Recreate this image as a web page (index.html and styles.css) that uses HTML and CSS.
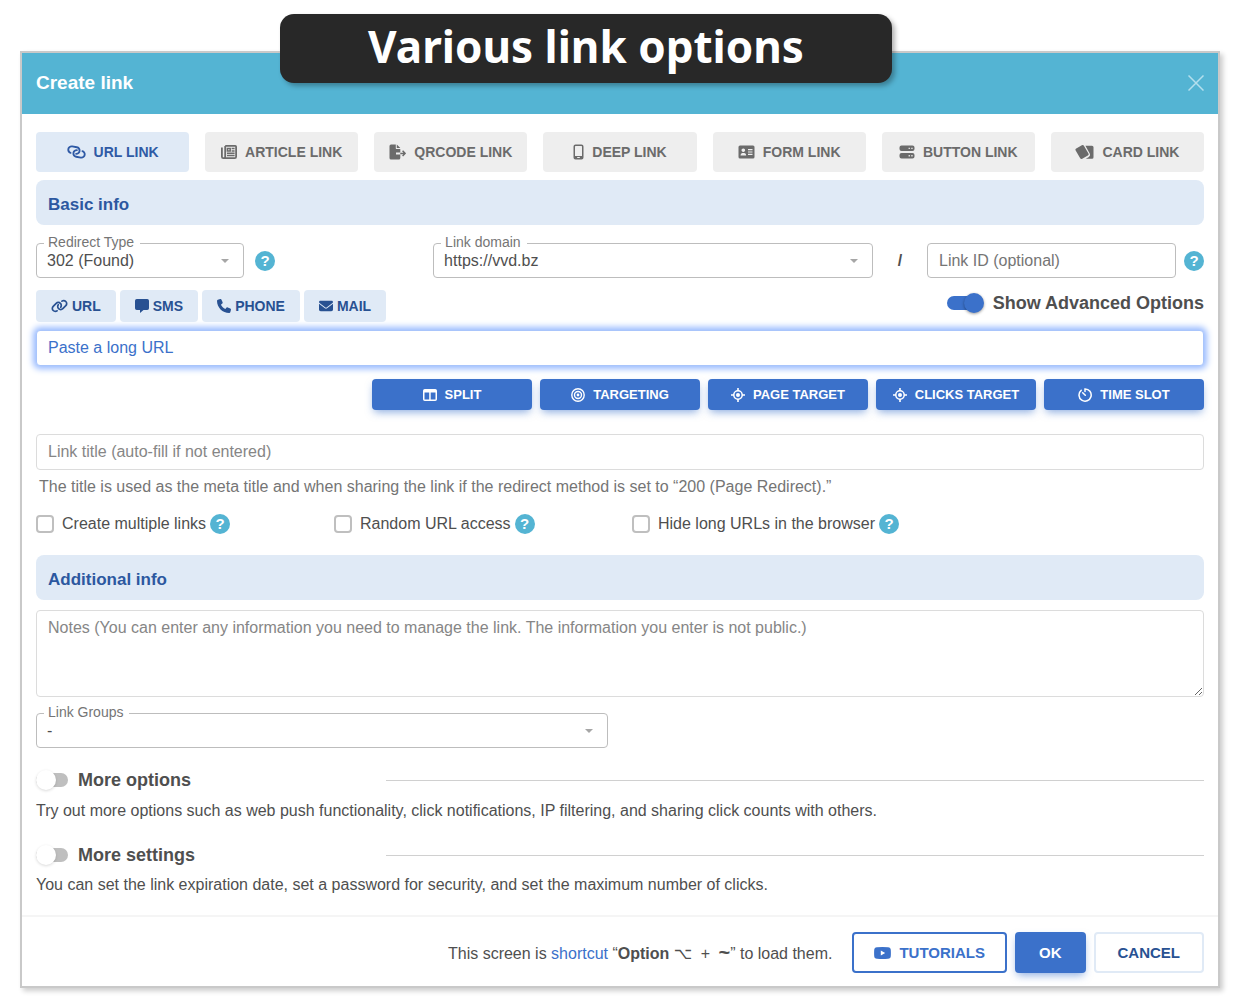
FILE: index.html
```html
<!DOCTYPE html>
<html lang="en">

<head>
    <meta charset="UTF-8">
    <meta name="viewport" content="width=device-width, initial-scale=1.0">
    <title>Create link</title>
    <link rel="stylesheet" href="styles.css">
</head>

<body>
    <svg class="sprite" aria-hidden="true">
        <symbol id="i-link" viewBox="0 0 640 512">
            <path d="M579.8 267.7c56.5-56.5 56.5-148 0-204.5c-50-50-128.8-56.5-186.3-15.4l-1.6 1.1c-14.4 10.3-17.7 30.3-7.4 44.6s30.3 17.7 44.6 7.4l1.6-1.1c32.1-22.9 76-19.3 103.8 8.6c31.5 31.5 31.5 82.5 0 114L422.3 334.8c-31.5 31.5-82.5 31.5-114 0c-27.9-27.9-31.5-71.8-8.6-103.8l1.1-1.6c10.3-14.4 6.9-34.4-7.4-44.6s-34.4-6.9-44.6 7.4l-1.1 1.6C206.5 251.2 213 330 263 380c56.5 56.5 148 56.5 204.5 0L579.8 267.7zM60.2 244.3c-56.5 56.5-56.5 148 0 204.5c50 50 128.8 56.5 186.3 15.4l1.6-1.1c14.4-10.3 17.7-30.3 7.4-44.6s-30.3-17.7-44.6-7.4l-1.6 1.1c-32.1 22.9-76 19.3-103.8-8.6C74 372 74 321 105.5 289.5L217.7 177.2c31.5-31.5 82.5-31.5 114 0c27.9 27.9 31.5 71.8 8.6 103.9l-1.1 1.6c-10.3 14.4-6.9 34.4 7.4 44.6s34.4 6.9 44.6-7.4l1.1-1.6C433.5 260.8 427 182 377 132c-56.5-56.5-148-56.5-204.5 0L60.2 244.3z" />
        </symbol>
        <symbol id="i-crosshair" viewBox="0 0 14 14">
            <circle cx="7" cy="7" r="4.2" fill="none" stroke="currentColor" stroke-width="1.5" />
            <circle cx="7" cy="7" r="2" />
            <path d="M7 0v3M7 11v3M0 7h3M11 7h3" stroke="currentColor" stroke-width="1.6" />
        </symbol>
    </svg>

    <h1 class="banner">Various link options</h1>

    <form class="modal">
        <div class="modal-header">
            <h2>Create link</h2>
            <button type="button" class="close" aria-label="Close">
                <svg width="16" height="16" viewBox="0 0 16 16"><path d="M.5.5l15 15M15.5.5l-15 15" fill="none" stroke="currentColor" stroke-width="1.5" /></svg>
            </button>
        </div>

        <div class="modal-body">
            <div class="tabs">
                <button type="button" class="tab active">
                    <svg width="19" height="16" viewBox="0 0 640 512"><g transform="translate(320 256) rotate(55) translate(-320 -256)"><use href="#i-link" width="640" height="512" /></g></svg>
                    URL LINK
                </button>
                <button type="button" class="tab">
                    <svg width="16" height="14" viewBox="0 0 16 14"><path d="M4.2.9h10q.9 0 .9.9v9.9q0 1.4-1.4 1.4H2.3q-1.4 0-1.4-1.4V2.5M4.2.9v10.8q0 1.4-1.6 1.4" fill="none" stroke="currentColor" stroke-width="1.8" /><path d="M6.4 3.5h2.8v2.5H6.4zM10.6 3.6h3M10.6 5.9h3M6 8.2h7.6M6 10.5h7.6" fill="none" stroke="currentColor" stroke-width="1.5" /></svg>
                    ARTICLE LINK
                </button>
                <button type="button" class="tab">
                    <svg width="17" height="16" viewBox="0 0 17 16"><path d="M2 .5h4.8v3.7q0 .9.9.9h3.6v3.3H7v2h4.3V14q0 1.5-1.5 1.5H2Q.5 15.5.5 14V2Q.5.5 2 .5zM7.8.5l3.5 3.5H7.8z" /><path d="M11.3 9.4h4.5M13.6 6.8l2.5 2.6-2.5 2.6" fill="none" stroke="currentColor" stroke-width="1.5" /></svg>
                    QRCODE LINK
                </button>
                <button type="button" class="tab">
                    <svg width="11" height="16" viewBox="0 0 11 16"><path fill-rule="evenodd" d="M2.5.5h6Q10.5.5 10.5 2.5v11q0 2-2 2h-6q-2 0-2-2v-11q0-2 2-2zM2 2.4v9.6h7V2.4Q9 2 8.5 2h-6Q2 2 2 2.4zM4.2 13v1h2.6v-1z" /></svg>
                    DEEP LINK
                </button>
                <button type="button" class="tab">
                    <svg width="17" height="14" viewBox="0 0 17 14"><path fill-rule="evenodd" d="M2 .5h13q1.5 0 1.5 1.5v10q0 1.5-1.5 1.5H2Q.5 13.5.5 12V2Q.5.5 2 .5zM5.3 3.4a1.8 1.8 0 1 0 .01 0zM2.5 10.5h5.7Q8.2 8 6.3 8H4.4Q2.5 8 2.5 10.5zM10 4v1.2h4.5V4zM10 6.4v1.2h4.5V6.4zM10 8.8V10h4.5V8.8z" /></svg>
                    FORM LINK
                </button>
                <button type="button" class="tab">
                    <svg width="16" height="14" viewBox="0 0 16 14"><path fill-rule="evenodd" d="M2.5.5h11q2 0 2 2v1.6q0 2-2 2h-11q-2 0-2-2V2.5q0-2 2-2zM2.5 7.9h11q2 0 2 2v1.6q0 2-2 2h-11q-2 0-2-2V9.9q0-2 2-2zM9.6 2.7v1.3h1.3V2.7zM12.3 2.7v1.3h1.3V2.7zM9.6 10.1v1.3h1.3v-1.3zM12.3 10.1v1.3h1.3v-1.3z" /></svg>
                    BUTTON LINK
                </button>
                <button type="button" class="tab">
                    <svg width="19" height="16" viewBox="0 0 19 16"><rect x="2.3" y="2" width="9.5" height="12" rx="1.5" transform="rotate(-30 7 8)" /><path d="M10.4 1.7h6.6q1.5 0 1.5 1.5v10q0 1.5-1.5 1.5h-6.3q3.5-1.4 4.2-3 .4-1-.3-2.4z" /></svg>
                    CARD LINK
                </button>
            </div>

            <h3 class="section">Basic info</h3>

            <div class="domain-row">
                <div class="group">
                    <div class="field redirect">
                        <label for="redirect">Redirect Type</label>
                        <select id="redirect"><option>302 (Found)</option></select>
                    </div>
                    <button type="button" class="help">?</button>
                </div>
                <div class="group">
                    <div class="field domain">
                        <label for="domain">Link domain</label>
                        <select id="domain"><option>https://vvd.bz</option></select>
                    </div>
                    <span class="slash">/</span>
                    <input type="text" class="text link-id" placeholder="Link ID (optional)" aria-label="Link ID">
                    <button type="button" class="help">?</button>
                </div>
            </div>

            <div class="type-row">
                <div class="types">
                    <button type="button">
                        <svg width="17" height="14"><use href="#i-link" /></svg>URL
                    </button>
                    <button type="button">
                        <svg width="14" height="14" viewBox="0 0 14 14"><path d="M1.8 0h10.4Q14 0 14 1.8v7.4q0 1.8-1.8 1.8H8.5L5 14v-3H1.8Q0 11 0 9.2V1.8Q0 0 1.8 0z" /></svg>SMS
                    </button>
                    <button type="button">
                        <svg width="14" height="14" viewBox="0 0 512 512"><path d="M164.9 24.6c-7.7-18.6-28-28.5-47.4-23.2l-88 24C12.1 30.2 0 46 0 64C0 311.4 200.6 512 448 512c18 0 33.8-12.1 38.6-29.5l24-88c5.3-19.4-4.6-39.7-23.2-47.4l-96-40c-16.3-6.8-35.2-2.1-46.3 11.6L304.7 368C234.3 334.7 177.3 277.7 144 207.3L193.3 167c13.7-11.2 18.4-30 11.6-46.3l-40-96z" /></svg>PHONE
                    </button>
                    <button type="button">
                        <svg width="14" height="14" viewBox="0 0 512 512"><path d="M48 64C21.5 64 0 85.5 0 112c0 15.1 7.1 29.3 19.2 38.4L236.8 313.6c11.4 8.5 27 8.5 38.4 0L492.8 150.4c12.1-9.1 19.2-23.3 19.2-38.4c0-26.5-21.5-48-48-48H48zM0 176V384c0 35.3 28.7 64 64 64H448c35.3 0 64-28.7 64-64V176L294.4 339.2c-22.8 17.1-54 17.1-76.8 0L0 176z" /></svg>MAIL
                    </button>
                </div>
                <label class="switch"><input type="checkbox" checked>Show Advanced Options</label>
            </div>

            <input type="text" class="text long-url" placeholder="Paste a long URL" aria-label="Long URL">

            <div class="targets">
                <button type="button" class="primary">
                    <svg width="14" height="14" viewBox="0 0 14 14"><path fill-rule="evenodd" d="M1.8 1h10.4Q14 1 14 2.8v8.4q0 1.8-1.8 1.8H1.8Q0 13 0 11.2V2.8Q0 1 1.8 1zM1.5 4.5v7h4.7v-7zM7.7 4.5v7h4.8v-7z" /></svg>
                    SPLIT
                </button>
                <button type="button" class="primary">
                    <svg width="14" height="14" viewBox="0 0 14 14"><g fill="none" stroke="currentColor" stroke-width="1.4"><circle cx="7" cy="7" r="6.2" /><circle cx="7" cy="7" r="3.5" /></g><circle cx="7" cy="7" r="1.4" /></svg>
                    TARGETING
                </button>
                <button type="button" class="primary">
                    <svg width="14" height="14"><use href="#i-crosshair" /></svg>
                    PAGE TARGET
                </button>
                <button type="button" class="primary">
                    <svg width="14" height="14"><use href="#i-crosshair" /></svg>
                    CLICKS TARGET
                </button>
                <button type="button" class="primary">
                    <svg width="14" height="14" viewBox="0 0 14 14"><path d="M3.2 2.3A6.1 6.1 0 1 0 7 .9V3.6M4.7 4.7L7.3 7.3" fill="none" stroke="currentColor" stroke-width="1.5" stroke-linecap="round" /></svg>
                    TIME SLOT
                </button>
            </div>

            <input type="text" class="text light" placeholder="Link title (auto-fill if not entered)" aria-label="Link title">
            <p class="hint">The title is used as the meta title and when sharing the link if the redirect method is set to “200 (Page Redirect).”</p>

            <div class="checks">
                <div>
                    <label><input type="checkbox">Create multiple links</label>
                    <button type="button" class="help">?</button>
                </div>
                <div>
                    <label><input type="checkbox">Random URL access</label>
                    <button type="button" class="help">?</button>
                </div>
                <div>
                    <label><input type="checkbox">Hide long URLs in the browser</label>
                    <button type="button" class="help">?</button>
                </div>
            </div>

            <h3 class="section">Additional info</h3>

            <textarea class="text light notes" aria-label="Notes" placeholder="Notes (You can enter any information you need to manage the link. The information you enter is not public.)"></textarea>

            <div class="field groups">
                <label for="groups">Link Groups</label>
                <select id="groups"><option>-</option></select>
            </div>

            <div class="more">
                <label class="switch"><input type="checkbox">More options</label>
                <hr>
            </div>
            <p class="desc">Try out more options such as web push functionality, click notifications, IP filtering, and sharing click counts with others.</p>
            <div class="more">
                <label class="switch"><input type="checkbox">More settings</label>
                <hr>
            </div>
            <p class="desc">You can set the link expiration date, set a password for security, and set the maximum number of clicks.</p>
        </div>

        <div class="modal-footer">
            <p>This screen is <a href="#">shortcut</a> “<b>Option <span class="key">⌥</span></b> + <b class="tilde">~</b>” to load them.</p>
            <button type="button" class="tutorials">
                <svg width="17" height="12" viewBox="0 0 17 12"><path fill-rule="evenodd" d="M3 .2Q8.5-.2 14 .2q2.7.2 2.8 2.8.2 3 0 6-.1 2.6-2.8 2.8-5.5.4-11 0Q.3 11.6.2 9 0 6 .2 3 .3.4 3 .2zM6.8 3.5v5L11.2 6z" /></svg>
                TUTORIALS
            </button>
            <button type="button" class="primary">OK</button>
            <button type="button" class="cancel">CANCEL</button>
        </div>
    </form>
</body>

</html>
```
FILE: styles.css
```css
* {
    box-sizing: border-box;
    padding: 0;
    margin: 0;
}

body {
    background-color: #fff;
    color: #4f4f4f;
    font-family: "Liberation Sans", Arial, sans-serif;
    font-size: 16px;
    line-height: 24px;
    padding: 51px 20px 12px;
}

button,
input,
select,
textarea {
    font: inherit;
    color: inherit;
}

button {
    display: flex;
    align-items: center;
    justify-content: center;
    border: none;
    border-radius: 4px;
    font-weight: bold;
    white-space: nowrap;
    cursor: pointer;
}

svg {
    flex: none;
    fill: currentColor;
}

.sprite {
    position: absolute;
    width: 0;
    height: 0;
}

.banner {
    position: absolute;
    top: 14px;
    left: 280px;
    width: 612px;
    height: 69px;
    border-radius: 14px;
    background-color: #282828;
    box-shadow: 3px 3px 5px rgba(0, 0, 0, 0.3);
    color: #fff;
    font-family: "Noto Sans", sans-serif;
    font-size: 44px;
    font-weight: bold;
    line-height: 64px;
    text-align: center;
}

.modal {
    border: 2px solid #c9c9c9;
    background-color: #fff;
    box-shadow: 3px 3px 5px rgba(0, 0, 0, 0.2);
}

.modal-header {
    display: flex;
    align-items: center;
    justify-content: space-between;
    height: 61px;
    padding: 0 14px 2px;
    background-color: #54b4d3;
    color: #fff;
}

.modal-header h2 {
    font-size: 19px;
}

.close {
    background: none;
    color: #b4dfed;
}

.modal-body {
    padding: 18px 14px;
}

/* link kinds */
.tabs {
    display: flex;
    gap: 16px;
}

.tab {
    flex: 1;
    gap: 8px;
    height: 40px;
    background-color: #eee;
    color: #6b6b6b;
    font-size: 14px;
}

.tab.active {
    background-color: #e0eaf6;
    color: #2f5aa5;
}

.section {
    margin-top: 8px;
    padding: 14px 12px 10px;
    border-radius: 8px;
    background-color: #e0eaf6;
    color: #2c58a0;
    font-size: 17px;
    line-height: 21px;
}

.domain-row {
    display: grid;
    grid-template-columns: 34fr 66fr;
    margin-top: 18px;
}

.group {
    display: flex;
    align-items: center;
}

.field {
    position: relative;
}

.field label {
    position: absolute;
    top: -9px;
    left: 8px;
    padding: 0 6px 0 4px;
    background-color: #fff;
    color: #757575;
    font-size: 14px;
    line-height: 16px;
}

.field select {
    display: block;
    width: 100%;
    height: 35px;
    padding-left: 10px;
    border: 1px solid #bdbdbd;
    border-radius: 4px;
    background-color: #fff;
    appearance: none;
}

.field::after {
    content: "";
    position: absolute;
    top: 16px;
    right: 15px;
    border: 4px solid transparent;
    border-top-color: #a6a6a6;
    border-bottom: none;
}

.redirect {
    width: 208px;
    margin-right: 11px;
}

.domain {
    flex: 1;
}

.slash {
    width: 54px;
    font-weight: bold;
    text-align: center;
}

.text {
    display: block;
    width: 100%;
    height: 36px;
    padding: 0 11px;
    border: 1px solid #bdbdbd;
    border-radius: 4px;
    background-color: #fff;
    outline: none;
}

.text::placeholder {
    color: #757575;
}

.text.light {
    border-color: #dcdcdc;
}

.text.light::placeholder {
    color: #868686;
}

.link-id {
    width: 249px;
    height: 35px;
    margin-right: 8px;
}

.help {
    flex: none;
    width: 20px;
    height: 20px;
    border-radius: 50%;
    background-color: #54b4d3;
    color: #fff;
    font-size: 15px;
    line-height: 20px;
}

.type-row {
    display: flex;
    align-items: center;
    justify-content: space-between;
    margin: 12px 0 8px;
}

.types {
    display: flex;
    gap: 4px;
}

.types button {
    gap: 4px;
    height: 32px;
    padding: 0 15px;
    background-color: #e0eaf6;
    color: #285192;
    font-size: 14px;
}

.switch {
    display: flex;
    align-items: center;
    height: 24px;
    font-size: 18px;
    font-weight: bold;
    cursor: pointer;
}

.type-row .switch {
    margin-bottom: 6px;
}

.switch input {
    position: relative;
    width: 32px;
    height: 14px;
    margin-right: 10px;
    border-radius: 7px;
    background-color: #bfbfbf;
    appearance: none;
}

.switch input::after {
    content: "";
    position: absolute;
    top: -3px;
    left: 0;
    width: 20px;
    height: 20px;
    border-radius: 50%;
    background-color: #fff;
    box-shadow: 0 1px 3px rgba(0, 0, 0, 0.15);
}

.switch input:checked {
    width: 36px;
    background-color: #3b71ca;
}

.switch input:checked::after {
    left: 17px;
    background-color: #3b71ca;
    box-shadow: 0 1px 3px rgba(0, 0, 0, 0.4);
}

.long-url {
    border-color: #a9c5fb;
    box-shadow: 0 0 6px 3px #99bbff;
}

.long-url::placeholder {
    color: #3b71ca;
}

.targets {
    display: flex;
    justify-content: flex-end;
    gap: 8px;
    margin: 13px 0 24px;
}

.primary {
    gap: 8px;
    background-color: #3b71ca;
    box-shadow: 0 4px 8px -2px rgba(59, 113, 202, 0.6);
    color: #fff;
}

.targets .primary {
    width: 160px;
    height: 31px;
    font-size: 13px;
}

.hint {
    padding: 5px 3px 3px;
    color: #757575;
}

.checks {
    display: flex;
    margin: 10px 0 19px;
}

.checks div {
    display: flex;
    align-items: center;
    gap: 4px;
    width: 298px;
    white-space: nowrap;
}

.checks label {
    display: flex;
    align-items: center;
    gap: 8px;
}

.checks input {
    width: 18px;
    height: 18px;
    border: 2px solid #bfbfbf;
    border-radius: 4px;
    background-color: #fff;
    appearance: none;
}

.notes {
    height: 87px;
    margin-top: 10px;
    padding: 5px 11px;
    resize: vertical;
}

.groups {
    width: 49%;
    margin: 16px 0 20px;
}

.more {
    display: grid;
    grid-template-columns: 30% 70%;
    align-items: center;
}

.more hr {
    border: none;
    border-top: 1px solid #d0d0d0;
}

.desc {
    margin: 7px 0 20px;
}

.desc:last-child {
    margin: 6px 0 0;
}

.modal-footer {
    display: flex;
    align-items: center;
    justify-content: flex-end;
    gap: 8px;
    padding: 15px 14px 13px;
    border-top: 2px solid #f5f5f5;
}

.modal-footer p {
    margin-right: 12px;
}

.modal-footer a {
    color: #3b71ca;
    text-decoration: none;
}

.key {
    margin-right: 4px;
    font-family: "DejaVu Sans", sans-serif;
    font-weight: normal;
}

.tilde {
    margin-left: 4px;
    font-size: 20px;
}

.modal-footer button {
    height: 41px;
    padding: 0 22px;
    font-size: 15px;
}

.modal-footer .primary {
    padding: 0 24px;
}

.modal-footer .tutorials {
    border: 2px solid #3b71ca;
    padding: 0 20px;
    gap: 8px;
    background-color: #fff;
    color: #3b71ca;
}

.modal-footer .cancel {
    border: 2px solid #e0eaf6;
    background-color: #fff;
    color: #285192;
}
```
